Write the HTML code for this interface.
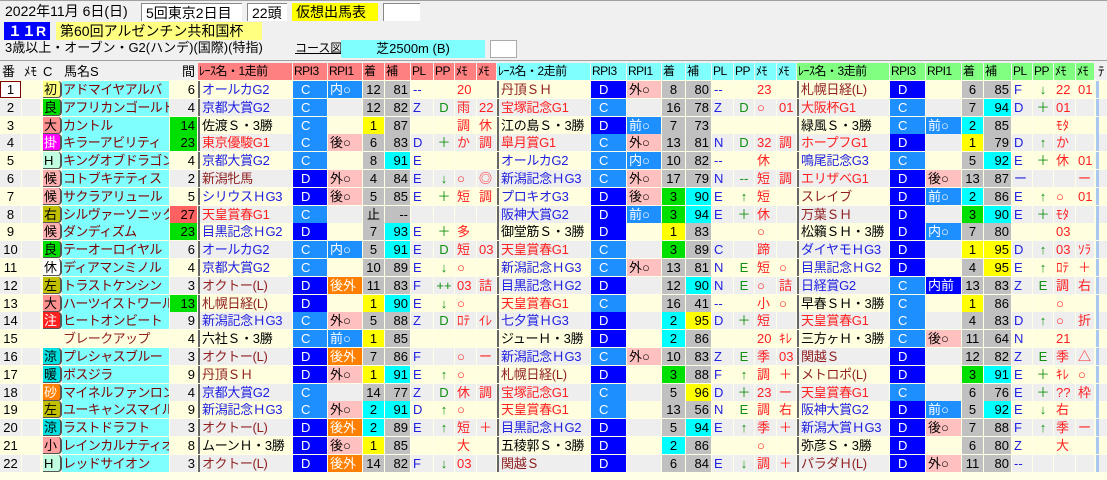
<!DOCTYPE html><html><head><meta charset="utf-8"><style>
body{margin:0;width:1107px;height:480px;background:#f0f0f0;overflow:hidden;font-family:"Liberation Sans","Noto Sans CJK JP",sans-serif;position:relative}
.c{position:absolute;box-sizing:border-box;font-size:13px;line-height:17px;height:17px;white-space:nowrap;overflow:hidden;padding:0 2px}
.t{position:absolute;font-size:14px;line-height:17px;white-space:nowrap}
.bx{position:absolute;box-sizing:border-box;height:18px;font-size:14px;line-height:18px;padding:0 4px;white-space:nowrap}
</style></head><body>
<div style="position:absolute;left:0;top:0;width:1107px;height:1px;background:#a0a0a0"></div>
<div class="t" style="left:5px;top:3px">2022年11月 6日(日)</div>
<div class="bx" style="left:141px;top:3px;width:101px;background:#fff;border-top:1px solid #888;border-left:1px solid #888">5回東京2日目</div>
<div class="bx" style="left:247px;top:3px;width:40px;background:#fff;border-top:1px solid #888;border-left:1px solid #888">22頭</div>
<div class="bx" style="left:292px;top:3px;width:86px;background:#ffff00">仮想出馬表</div>
<div class="bx" style="left:383px;top:3px;width:37px;background:#fff;border-top:1px solid #888;border-left:1px solid #888"></div>
<div class="bx" style="left:4px;top:22px;width:46px;background:#0000ff;color:#fff;font-weight:bold">１１R</div>
<div class="bx" style="left:56px;top:22px;width:206px;background:#ffff80">第60回アルゼンチン共和国杯</div>
<div class="t" style="left:5px;top:39px;font-size:13px">3歳以上・オーブン・G2(ハンデ)(国際)(特指)</div>
<div class="t" style="left:295px;top:40px;font-size:12px;text-decoration:underline">コース図</div>
<div class="bx" style="left:341px;top:40px;width:144px;background:#80ffff;text-align:center;font-size:13px">芝2500m (B)</div>
<div class="bx" style="left:490px;top:40px;width:27px;background:#fff;border:1px solid #aaa"></div>
<div style="position:absolute;left:0;top:60px;width:1107px;height:1px;background:#a0a0a0"></div>
<div style="position:absolute;left:0;top:79px;width:1107px;height:401px;background:#ffffe8"></div>
<div id="g"></div>
<script>
var cols=[[0,22],[22,19],[41,21],[62,108],[170,28],[198,95],[293,35],[328,35],[363,22],[385,26],[411,23],[434,21],[455,22],[477,20],[497,94],[591,36],[627,35],[662,24],[686,26],[712,22],[734,21],[755,22],[777,20],[797,93],[890,36],[926,36],[962,22],[984,28],[1012,21],[1033,21],[1054,22],[1076,19]];
var hd=["番","ﾒﾓ","C","馬名S","間"];var rh=["ﾚｰｽ名・1走前","RPI3","RPI1","着","補","PL","PP","ﾒﾓ","ﾒﾓ"];
var g=document.getElementById('g'),h='';
function cell(ci,y,txt,st){var c=cols[ci];h+='<div class="c" style="left:'+c[0]+'px;top:'+y+'px;width:'+(c[1]-1)+'px;'+(st||'')+'">'+txt+'</div>';}
for(var i=0;i<5;i++)cell(i,63,hd[i],'background:#f0f0f0;'+(i==4?'text-align:right':''));
var hb=['#ff8080','#80ffff','#80ff80'];
for(var k=0;k<3;k++)for(var j=0;j<9;j++){var t=rh[j];if(j==0)t='ﾚｰｽ名・'+(k+1)+'走前';cell(5+k*9+j,63,t,'background:'+hb[k]+';font-size:12px;padding:0 1px;letter-spacing:-0.5px');}
h+='<div class="c" style="left:1096px;top:63px;width:11px;background:#f0f0f0">ﾃ</div>';
var mk={"初":"#ffff80;color:#000","良":"#00e000","大":"#ff9090","掛":"#ff00ff;color:#fff","H":"#c0ffe0","候":"#ffb0b0","右":"#c0c000","休":"#fff","左":"#c0c000","注":"#ff2020;color:#fff","涼":"#00e0e0","暖":"#00e0e0","砂":"#ff8000;color:#fff","小":"#ffa0a0"};
var rc={r:"#ff2020",b:"#2020e0",k:"#000",m:"#902020"};
var D=[
["","初","アドマイヤアルバ","6","",["オールカG2","b","C","内○","12","81","--","","20",""],["丹頂ＳＨ","m","D","外○","8","80","--","","23",""],["札幌日経(L)","m","D","","6","85","F","↓","22","01"]],
["","良","アフリカンゴールド","4","",["京都大賞G2","b","C","","12","82","Z","D","雨","22"],["宝塚記念G1","r","C","","16","78","Z","D","○","01"],["大阪杯G1","r","C","","7","94","D","＋","01",""]],
["","大","カントル","14","g",["佐渡Ｓ・3勝","k","C","","1","87","","","調","休"],["江の島Ｓ・3勝","k","D","前○","7","73","","","",""],["緑風Ｓ・3勝","k","C","前○","2","85","","","ﾓﾀ",""]],
["","掛","キラーアビリティ","23","g",["東京優駿G1","r","C","後○","6","83","D","＋","か","調"],["皐月賞G1","r","C","外○","13","81","N","D","32","調"],["ホープフG1","r","D","","1","79","D","↑","か",""]],
["","H","キングオブドラゴン","4","",["京都大賞G2","b","C","","8","91","E","","",""],["オールカG2","b","C","内○","10","82","--","","休",""],["鳴尾記念G3","b","C","","5","92","E","＋","休","01"]],
["","候","コトブキテティス","2","",["新潟牝馬","m","D","外○","4","84","E","↓","○","◎"],["新潟記念ＨG3","b","C","外○","17","79","N","--","短","調"],["エリザベG1","r","D","後○","13","87","ー","","","ー"]],
["","候","サクラアリュール","5","",["シリウスＨG3","b","D","後○","5","85","E","＋","短","調"],["プロキオG3","b","D","後○","3","90","E","↑","短",""],["スレイブ","m","D","前○","2","86","E","↑","○","01"]],
["","右","シルヴァーソニック","27","r",["天皇賞春G1","r","C","","止","--","","","",""],["阪神大賞G2","b","D","前○","3","94","E","＋","休",""],["万葉ＳＨ","m","D","","3","90","E","＋","ﾓﾀ",""]],
["","候","ダンディズム","23","g",["目黒記念ＨG2","b","D","","7","93","E","＋","多",""],["御堂筋Ｓ・3勝","k","D","","1","83","","","○",""],["松籟ＳＨ・3勝","k","D","内○","7","80","","","03",""]],
["","良","テーオーロイヤル","6","",["オールカG2","b","C","内○","5","91","E","D","短","03"],["天皇賞春G1","r","C","","3","89","C","","蹄",""],["ダイヤモＨG3","b","D","","1","95","D","↑","03","ｿﾗ"]],
["","休","ディアマンミノル","4","",["京都大賞G2","b","C","","10","89","E","↓","○",""],["新潟記念ＨG3","b","C","外○","13","81","N","E","短","○"],["目黒記念ＨG2","b","D","","4","95","E","↑","ﾛﾃ","＋"]],
["","左","トラストケンシン","3","",["オクトー(L)","m","D","後外","11","83","F","++","03","詰"],["目黒記念ＨG2","b","D","","12","90","N","E","○","詰"],["日経賞G2","b","C","内前","13","83","Z","E","調","右"]],
["","大","ハーツイストワール","13","g",["札幌日経(L)","m","D","","1","90","E","↓","○",""],["天皇賞春G1","r","C","","16","41","--","","小","○"],["早春ＳＨ・3勝","k","C","","1","86","","","○",""]],
["","注","ヒートオンビート","9","",["新潟記念ＨG3","b","C","外○","5","88","Z","D","ﾛﾃ","ｲﾚ"],["七夕賞ＨG3","b","D","","2","95","D","＋","短",""],["天皇賞春G1","r","C","","4","83","D","↑","○","折"]],
["","","ブレークアップ","4","",["六社Ｓ・3勝","k","C","前○","1","85","","","",""],["ジューＨ・3勝","k","D","","2","86","","","20","ｷﾚ"],["三方ヶＨ・3勝","k","C","後○","11","64","N","","21",""]],
["","涼","プレシャスブルー","3","",["オクトー(L)","m","D","後外","7","86","F","","○","ー"],["新潟記念ＨG3","b","C","外○","10","83","Z","E","季","03"],["関越Ｓ","m","D","","12","82","Z","E","季","△"]],
["","暖","ボスジラ","9","",["丹頂ＳＨ","m","D","外○","1","91","E","↑","○",""],["札幌日経(L)","m","D","","3","88","F","↑","調","＋"],["メトロポ(L)","m","D","","3","91","E","＋","ｷﾚ","○"]],
["","砂","マイネルファンロン","4","",["京都大賞G2","b","C","","14","77","Z","D","休","調"],["宝塚記念G1","r","C","","5","96","D","＋","23","ー"],["天皇賞春G1","r","C","","6","76","E","＋","??","枠"]],
["","左","ユーキャンスマイル","9","",["新潟記念ＨG3","b","C","外○","2","91","D","↑","○",""],["天皇賞春G1","r","C","","13","56","N","E","調","右"],["阪神大賞G2","b","D","前○","5","92","E","↓","右",""]],
["","涼","ラストドラフト","3","",["オクトー(L)","m","D","後外","2","89","E","↑","短","＋"],["目黒記念ＨG2","b","D","","5","94","E","↑","季","＋"],["新潟大賞ＨG3","b","D","後○","7","88","F","↑","季","ー"]],
["","小","レインカルナティオ","8","",["ムーンＨ・3勝","k","D","後○","1","85","","","大",""],["五稜郭Ｓ・3勝","k","D","","2","86","","","○",""],["弥彦Ｓ・3勝","k","D","","6","80","Z","","大",""]],
["","H","レッドサイオン","3","",["オクトー(L)","m","D","後外","14","82","F","↓","03",""],["関越Ｓ","m","D","","6","84","E","↓","調","＋"],["パラダＨ(L)","m","D","外○","11","80","--","","",""]]];
for(var i=0;i<22;i++){var r=D[i],y=Math.round(81+i*17.8),bg=i%2?'#eeeeee':'#ffffe0';
cell(0,y,String(i+1),'background:'+bg+';text-align:center;'+(i==0?'border:1px solid #800000;background:#fff;line-height:15px;':''));
cell(1,y,'','background:'+bg);
cell(2,y,r[1],r[1]?'background:'+mk[r[1]]+';border-radius:0 4px 4px 0;border-right:2px solid #555;border-bottom:1px solid #555;width:19px;left:43px;padding:0 1px':'background:'+bg);
cell(3,y,r[2],'letter-spacing:-0.6px;padding-left:1px;background:'+(i==14?bg+';color:#902020':'#80ffff;color:#800000'));
cell(4,y,r[3],'text-align:right;background:'+(r[4]=='g'?'#00e000':r[4]=='r'?'#ff6060':bg));
for(var k=0;k<3;k++){var R=r[5+k],b=5+k*9;
cell(b,y,R[0],'background:'+bg+';color:'+rc[R[1]]+';border-left:2px solid #666;padding-left:2px;letter-spacing:-0.3px');
cell(b+1,y,R[2],'color:#fff;padding-left:8px;background:'+(R[2]=='D'?'#0000ff':'#1e8fff'));
var p=R[3],ps=bg;if(p=='内○'||p=='前○')ps='#1e8fff;color:#fff';else if(p=='内前')ps='#0000ff;color:#fff';else if(p=='後外')ps='#ff8000;color:#fff';else if(p)ps='#ffc0c0';
cell(b+2,y,p,'background:'+ps);
var ch=R[4],cb=ch=='1'?'#ffff00':ch=='2'?'#00ffff':ch=='3'?'#00e000':'#c0c0c0';
cell(b+3,y,ch,'text-align:center;background:'+cb);
var hv=parseInt(R[5]),hb2=hv>=95?'#ffff00':hv>=90?'#00ffff':'#c0c0c0';
cell(b+4,y,R[5],'text-align:right;background:'+hb2);
cell(b+5,y,R[6],'color:#2020e0;background:'+bg);
cell(b+6,y,R[7],'color:#109010;text-align:center;background:'+bg);
cell(b+7,y,R[8],'color:#ff2020;background:'+bg);
cell(b+8,y,R[9],'color:#ff2020;background:'+bg);}
h+='<div class="c" style="left:1096px;top:'+y+'px;width:11px;background:'+bg+';border-left:3px solid #a8c8f0"></div>';}
g.innerHTML=h;
</script>
</body></html>
